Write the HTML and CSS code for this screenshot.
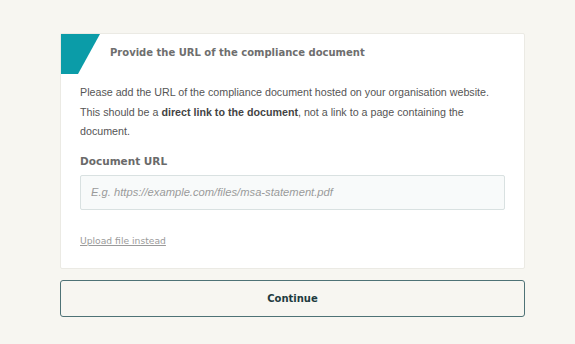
FILE: index.html
```html
<!DOCTYPE html>
<html lang="en">
<head>
    <meta charset="UTF-8">
    <meta name="viewport" content="width=device-width, initial-scale=1.0">
    <title>Compliance document</title>
    <link rel="stylesheet" href="styles.css">
</head>
<body>
    <main class="page">
        <section class="card">
            <div class="card-head">
                <svg class="corner" width="39" height="40" viewBox="0 0 39 40">
                    <polygon points="0,0 39,0 17,40 0,40" fill="#0b9ca8"/>
                </svg>
                <h2>Provide the URL of the compliance document</h2>
            </div>
            <div class="card-body">
                <p>Please add the URL of the compliance document hosted on your organisation website. This should be a <b>direct link to the document</b>, not a link to a page containing the document.</p>
                <label for="doc-url">Document URL</label>
                <input type="text" id="doc-url" class="url-input" placeholder="E.g. https://example.com/files/msa-statement.pdf">
                <a href="#" class="upload-link">Upload file instead</a>
            </div>
        </section>
        <button class="continue">Continue</button>
    </main>
</body>
</html>
```

FILE: styles.css
```css
body {
    margin: 0;
    padding: 0;
    background-color: #f7f6f1;
    font-family: 'Liberation Sans', Arial, sans-serif;
}

.page {
    width: 465px;
    margin: 33px 0 0 60px;
}

.card {
    background-color: #fff;
    border: 1px solid #ebeae4;
    border-radius: 2px;
    box-sizing: border-box;
    height: 236px;
}

.card-head {
    display: flex;
    align-items: flex-start;
}

.corner {
    display: block;
    flex: none;
}

.card-head h2 {
    margin: 13px 0 0 10px;
    font-family: 'DejaVu Sans', sans-serif;
    font-size: 10px;
    font-weight: bold;
    color: #6e6e6e;
}

.card-body {
    padding: 9px 19px 0 19px;
}

.card-body p {
    margin: 0;
    font-size: 10.7px;
    line-height: 19.5px;
    color: #555;
}

.card-body p b {
    color: #444;
}

.card-body label {
    display: block;
    margin-top: 13px;
    font-family: 'DejaVu Sans', sans-serif;
    font-size: 10.5px;
    font-weight: bold;
    color: #6a6a6a;
}

.url-input {
    display: block;
    box-sizing: border-box;
    width: 100%;
    height: 35px;
    margin-top: 8px;
    padding: 0 10px;
    border: 1px solid #d9e1e1;
    border-radius: 2px;
    background-color: #f8fafa;
    font-family: 'Liberation Sans', Arial, sans-serif;
    font-size: 11.2px;
    font-style: italic;
    outline: none;
}

.url-input::placeholder {
    color: #9a9a9a;
}

.upload-link {
    display: inline-block;
    margin-top: 25px;
    font-family: 'DejaVu Sans', sans-serif;
    font-size: 9.2px;
    color: #9a9a9a;
}

.continue {
    display: block;
    width: 100%;
    height: 37px;
    margin-top: 11px;
    border: 1.5px solid #4e7276;
    border-radius: 3px;
    background-color: #f7f6f1;
    font-family: 'DejaVu Sans', sans-serif;
    font-size: 10px;
    font-weight: bold;
    color: #1e3b40;
    cursor: pointer;
}
```
